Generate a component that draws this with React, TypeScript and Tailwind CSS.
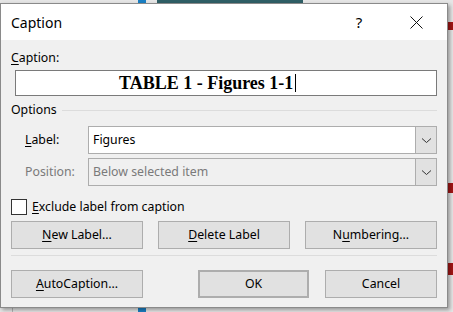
import React from 'react';

const ui = { fontFamily: '"Noto Sans", "Open Sans", Arial, sans-serif' };

const U = ({ children }: { children: React.ReactNode }) => (
  <span className="underline underline-offset-2 decoration-1">{children}</span>
);

const Chevron = () => (
  <svg width="11" height="7" viewBox="0 0 11 7" fill="none">
    <path d="M1 1.5 L5.5 5.5 L10 1.5" stroke="#333" strokeWidth="1" />
  </svg>
);

const Combo = ({ value, disabled }: { value: string; disabled?: boolean }) => (
  <div
    className={`flex-1 h-[28px] flex border border-[#adadad] ${
      disabled ? 'bg-[#f0f0f0]' : 'bg-white'
    }`}
  >
    <div
      className={`flex-1 flex items-center pl-[4px] text-[12.3px] ${
        disabled ? 'text-[#7a7a7a]' : 'text-black'
      }`}
    >
      {value}
    </div>
    <div className="w-[21px] bg-[#e1e1e1] border-l border-[#adadad] flex items-center justify-center">
      <Chevron />
    </div>
  </div>
);

const Btn = ({
  children,
  className = '',
}: {
  children: React.ReactNode;
  className?: string;
}) => (
  <div
    className={`h-[28px] flex items-center justify-center bg-[#e1e1e1] border border-[#adadad] text-[12.3px] text-black ${className}`}
  >
    {children}
  </div>
);

export default function App() {
  return (
    <div className="relative w-[453px] h-[312px] overflow-hidden bg-[#e6e6e6]" style={ui}>
      {/* what lies behind the dialog */}
      <div className="absolute left-[138px] top-0 w-[8px] h-[312px] bg-[#1a7fc4]" />
      <div className="absolute left-[157px] top-0 w-[146px] h-[4px] bg-[#2f5f66]" />
      <div className="absolute left-[12px] top-[300px] w-[1px] h-[12px] bg-[#b5b5b5]" />
      <div className="absolute left-[448px] top-[183px] w-[5px] h-[10px] bg-[#a31515]" />
      <div className="absolute left-[448px] top-[263px] w-[5px] h-[12px] bg-[#a31515]" />
      <div className="absolute left-[448px] top-[22px] w-[5px] h-[8px] bg-[#a31515]" />

      <div className="relative mt-[3px] w-[448px] h-[305px] border border-[#8a8a8a] bg-[#f0f0f0] shadow-[2px_2px_4px_rgba(0,0,0,0.35)] flex flex-col">
        {/* title bar */}
        <div className="h-[36px] bg-white flex items-center shrink-0">
          <div className="pl-[10px] text-[14px] text-black flex-1">Caption</div>
          <div className="w-[20px] text-[15px] text-black text-center mr-[24px]">?</div>
          <div className="w-[46px] h-[36px] flex items-center justify-center mr-[8px]">
            <svg width="13" height="13" viewBox="0 0 13 13">
              <path d="M0.5 0.5 L12.5 12.5 M12.5 0.5 L0.5 12.5" stroke="#111" strokeWidth="1" />
            </svg>
          </div>
        </div>

        {/* body */}
        <div className="px-[10px] pt-[10px] flex flex-col text-[12.3px] text-black">
          <div className="h-[16px] leading-[16px]">
            <U>C</U>aption:
          </div>
          <div className="mt-[4px] ml-[4px] h-[26px] bg-white border border-[#7a7a7a] flex items-center pl-[103px]">
            <span
              className="text-[18px] font-bold leading-none"
              style={{ fontFamily: '"Liberation Serif", "Times New Roman", serif' }}
            >
              TABLE 1 - Figures 1-1
            </span>
            <span className="ml-[2px] w-[1px] h-[18px] bg-black" />
          </div>

          <div className="mt-[6px] h-[16px] flex items-center gap-[5px]">
            <span className="leading-[16px]">Options</span>
            <div className="flex-1 h-[1px] bg-[#dcdcdc]" />
          </div>

          <div className="mt-[8px] flex items-center">
            <div className="w-[77px] pl-[14px]">
              <U>L</U>abel:
            </div>
            <Combo value="Figures" />
          </div>
          <div className="mt-[4px] flex items-center">
            <div className="w-[77px] pl-[14px] text-[#7a7a7a]">Position:</div>
            <Combo value="Below selected item" disabled />
          </div>

          <div className="mt-[13px] h-[16px] flex items-center gap-[5px]">
            <div className="w-[16px] h-[16px] bg-white border border-[#333]" />
            <span>
              <U>E</U>xclude label from caption
            </span>
          </div>

          <div className="mt-[6px] flex gap-[15px]">
            <Btn className="w-[132px]">
              <span>
                <U>N</U>ew Label...
              </span>
            </Btn>
            <Btn className="w-[132px]">
              <span>
                <U>D</U>elete Label
              </span>
            </Btn>
            <Btn className="w-[132px]">
              <span>
                N<U>u</U>mbering...
              </span>
            </Btn>
          </div>

          <div className="mt-[6px] h-[1px] bg-[#dcdcdc]" />

          <div className="mt-[14px] flex">
            <Btn className="w-[132px]">
              <span>
                <U>A</U>utoCaption...
              </span>
            </Btn>
            <Btn className="w-[111px] ml-[55px] border-2 border-[#0078d7]">OK</Btn>
            <Btn className="w-[112px] ml-[16px]">Cancel</Btn>
          </div>
        </div>
      </div>
    </div>
  );
}
